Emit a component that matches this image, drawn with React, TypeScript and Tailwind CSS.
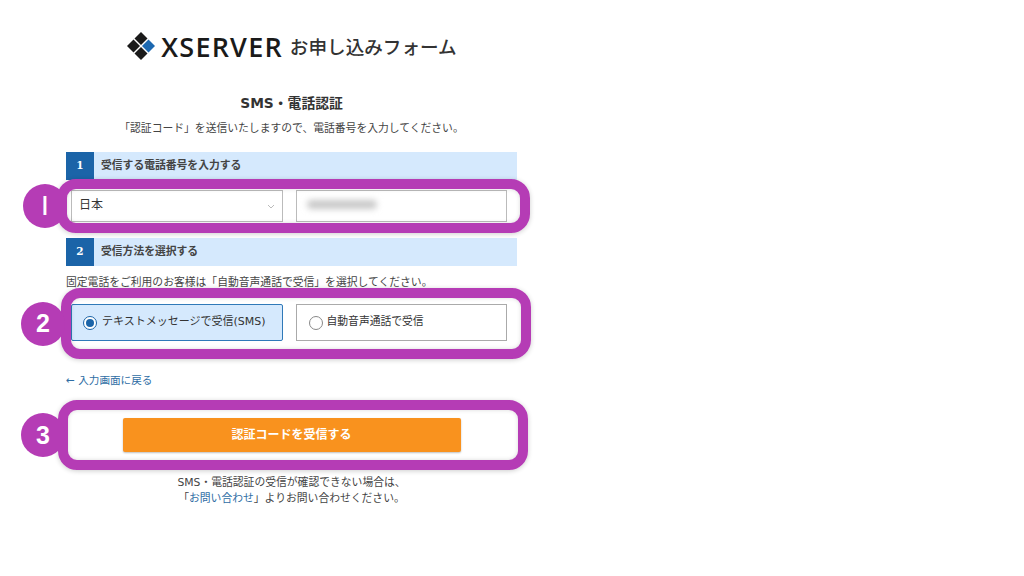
const jp = `"DejaVu Sans", "Noto Sans CJK JP", sans-serif`

function Logo() {
  return (
    <div className="flex h-[30px] items-center">
      <svg width="30" height="30" viewBox="0 0 30 30" className="shrink-0">
        <path d="M15 1 L21.5 7.5 L15 14 L8.5 7.5 Z" fill="#1a1a1a" />
        <path d="M7.5 8.5 L14 15 L7.5 21.5 L1 15 Z" fill="#1a1a1a" />
        <path d="M15 16 L21.5 22.5 L15 29 L8.5 22.5 Z" fill="#1a1a1a" />
        <path d="M22.5 8.5 L29 15 L22.5 21.5 L16 15 Z" fill="#1c68b0" />
      </svg>
      <span className="ml-[5px] font-['Open_Sans'] text-[27px] leading-none font-semibold tracking-[1.2px] text-[#1a1a1a]">
        XSERVER
      </span>
      <span className="ml-[7px] font-['Noto_Sans_CJK_JP'] text-[18.6px] leading-none font-medium text-[#333]">
        お申し込みフォーム
      </span>
    </div>
  )
}

function StepHeader({ n, label }: { n: number; label: string }) {
  return (
    <div className="flex h-[28px] items-center bg-[#d5e9fd]">
      <div className="flex h-full w-[28px] items-center justify-center bg-[#1b64a8] font-['DejaVu_Serif'] text-[10.5px] font-bold text-white">
        {n}
      </div>
      <span className="ml-[7px] text-[10.8px] leading-none font-bold text-[#444]">{label}</span>
    </div>
  )
}

function Ring({ n, className, badgeClass }: { n: string; className: string; badgeClass: string }) {
  return (
    <div className={`pointer-events-none absolute rounded-[19px] border-[10px] border-[#b53cb5] shadow-[0_1px_5px_rgba(0,0,0,0.2),inset_0_0_4px_rgba(0,0,0,0.15)] ${className}`}>
      <div className={`absolute top-1/2 flex size-[44px] -translate-y-1/2 items-center justify-center rounded-full bg-[#b53cb5] text-[25px] leading-none text-white ${badgeClass}`}>
        {n}
      </div>
    </div>
  )
}

export default function App() {
  return (
    <div
      className="h-[576px] w-[1024px] overflow-hidden bg-white pt-[31px] pl-[66px] text-[#444] [text-spacing-trim:space-all]"
      style={{ fontFamily: jp }}
    >
      <div className="w-[451px]">
        <div className="flex justify-center">
          <Logo />
        </div>

        <h1 className="mt-[32px] text-center text-[13.8px] leading-[20px] font-bold text-[#333]">SMS・電話認証</h1>
        <p className="mt-[6px] text-center text-[10.8px] leading-[20px]">
          「認証コード」を送信いたしますので、電話番号を入力してください。
        </p>

        <div className="mt-[13px]">
          <StepHeader n={1} label="受信する電話番号を入力する" />
        </div>

        <div className="relative mt-[10px] flex gap-[13px] pr-[10px] pl-[5px]">
          <div className="flex h-[32px] w-[212px] items-center justify-between border border-[#bbb] bg-white pr-[7px] pl-[7px] text-[12px] text-[#333]">
            <span className="mb-[3px]">日本</span>
            <svg width="8" height="5" viewBox="0 0 8 5" fill="none" stroke="#aaa" strokeWidth="0.8">
              <path d="M1 1 L4 4 L7 1" />
            </svg>
          </div>
          <div className="flex h-[32px] w-[212px] items-center border border-[#bbb] bg-white pb-[4px] pl-[10px]">
            <div className="h-[9px] w-[70px] rounded-full bg-[#c8c8c8] blur-[3px]" />
          </div>
          <Ring
            n="I"
            className="inset-y-[-11px] right-[-13px] left-[-9px]"
            badgeClass="left-[-44px] font-['Inter'] font-medium"
          />
        </div>

        <div className="mt-[16px]">
          <StepHeader n={2} label="受信方法を選択する" />
        </div>

        <p className="mt-[7px] text-[10.8px] leading-[20px]">固定電話をご利用のお客様は「自動音声通話で受信」を選択してください。</p>

        <div className="relative mt-[11px] flex gap-[13px] pr-[10px] pl-[5px]">
          <div className="flex h-[37px] w-[212px] items-center gap-[5px] rounded-[2px] border border-[#2f79b8] bg-[#d5e9fd] pl-[11px] text-[11px] text-[#333]">
            <span className="flex size-[14px] items-center justify-center rounded-full border border-[#1b64a8] bg-white">
              <span className="size-[8px] rounded-full bg-[#1b64a8]" />
            </span>
            <span>テキストメッセージで受信(SMS)</span>
          </div>
          <div className="flex h-[37px] w-[212px] items-center gap-[4px] border border-[#aaa] bg-white pl-[12px] text-[10.8px] text-[#333]">
            <span className="size-[14px] rounded-full border border-[#888] bg-white" />
            <span>自動音声通話で受信</span>
          </div>
          <Ring
            n="2"
            className="top-[-16px] right-[-14px] bottom-[-18px] left-[-5px]"
            badgeClass="left-[-50px] font-['Liberation_Sans'] font-bold"
          />
        </div>

        <a className="mt-[29px] block text-[10.6px] leading-[20px] text-[#2e6da4]">← 入力画面に戻る</a>

        <div className="relative mt-[28px] flex justify-center">
          <button
            type="button"
            className="h-[34px] w-[338px] rounded-[2px] bg-[#f9921e] text-[12px] font-bold text-white shadow-[0_1px_2px_rgba(0,0,0,0.25)]"
          >
            認証コードを受信する
          </button>
          <Ring
            n="3"
            className="inset-y-[-18px] right-[-11px] left-[-8px]"
            badgeClass="left-[-47px] font-['Liberation_Sans'] font-bold"
          />
        </div>

        <div className="mt-[23px] text-center text-[10.8px] leading-[16px]">
          <p>SMS・電話認証の受信が確認できない場合は、</p>
          <p>
            「<a className="text-[#2e6da4]">お問い合わせ</a>」よりお問い合わせください。
          </p>
        </div>
      </div>
    </div>
  )
}
